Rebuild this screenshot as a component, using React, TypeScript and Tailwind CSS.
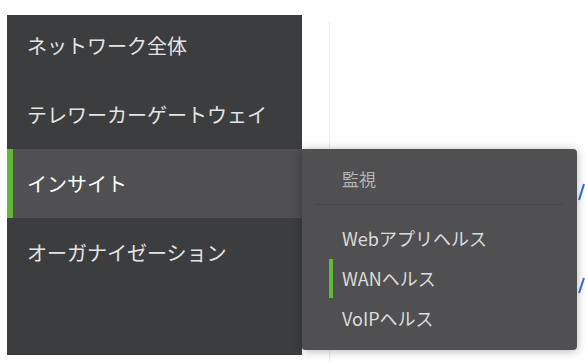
const font = { fontFamily: '"Noto Sans CJK JP", "Noto Sans", sans-serif' };

const navItems = [
  { label: "ネットワーク全体", first: true },
  { label: "テレワーカーゲートウェイ" },
  { label: "インサイト", active: true },
  { label: "オーガナイゼーション" },
];

const subItems = [
  { label: "Webアプリヘルス" },
  { label: "WANヘルス", active: true },
  { label: "VoIPヘルス" },
];

function Flyout() {
  return (
    <div className="absolute left-full top-0 z-10 w-[275px] rounded-r-[4px] rounded-bl-[3px] bg-[#505052] shadow-[0_1px_10px_rgba(0,0,0,0.3)]">
      <div className="h-[55px] pl-[40px] pt-[21px] text-[17px] leading-none text-[#b4b4b4]">監視</div>
      <div className="mx-[14px] h-px bg-[#464648]" />
      <ul className="pb-[12px] pt-[13px]">
        {subItems.map((item) => (
          <li key={item.label} className="relative flex h-[40px] items-center pl-[40px]">
            {item.active && <span className="absolute left-[27px] top-[1px] h-[39px] w-[4px] bg-[#5fb83a]" />}
            <span className="text-[18px] leading-none text-[#dcdcdc]">{item.label}</span>
          </li>
        ))}
      </ul>
    </div>
  );
}

export default function App() {
  return (
    <div className="flex h-[362px] w-[585px] overflow-hidden bg-white" style={font}>
      <div className="ml-[7px] mt-[15px] h-[340px] w-[295px] shrink-0 bg-[#3c3d3f]">
        {navItems.map((item) => (
          <div
            key={item.label}
            className={
              item.active
                ? "relative flex h-[69px] items-center border-l-[6px] border-[#5fb83a] bg-[#505052] pl-[14px]"
                : item.first
                  ? "flex h-[65px] items-center pb-[3px] pl-[20px]"
                  : "flex h-[69px] items-center pl-[20px]"
            }
          >
            <span
              className={
                item.active
                  ? "text-[20px] leading-none text-white"
                  : "text-[20px] leading-none text-[#e4e4e4]"
              }
            >
              {item.label}
            </span>
            {item.active && <Flyout />}
          </div>
        ))}
      </div>
      <div className="flex-1 pl-[27px] pt-[22px]">
        <div className="h-full border-l border-[#ececec]">
          <svg width="256" height="340" className="block">
            <path d="M249 178 L254 162" stroke="#2f6fe0" strokeWidth="2" fill="none" />
            <path d="M249 271 L254 256" stroke="#2f6fe0" strokeWidth="2" fill="none" />
          </svg>
        </div>
      </div>
    </div>
  );
}
